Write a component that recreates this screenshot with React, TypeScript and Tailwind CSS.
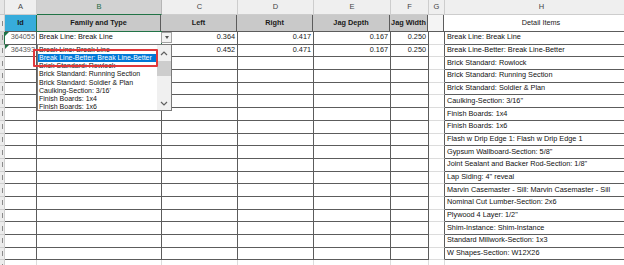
const FONT = { fontFamily: '"Liberation Sans", Arial, sans-serif' };

const columns = [
  { key: "A", w: "w-[32px]" },
  { key: "B", w: "w-[125px]" },
  { key: "C", w: "w-[76px]" },
  { key: "D", w: "w-[76px]" },
  { key: "E", w: "w-[77px]" },
  { key: "F", w: "w-[38px]" },
  { key: "G", w: "w-[16px]" },
  { key: "H", w: "w-[194px]" },
];

const details = [
  "Break Line: Break Line",
  "Break Line-Better: Break Line-Better",
  "Brick Standard: Rowlock",
  "Brick Standard: Running Section",
  "Brick Standard: Soldier & Plan",
  "Caulking-Section: 3/16\"",
  "Finish Boards: 1x4",
  "Finish Boards: 1x6",
  "Flash w Drip Edge 1: Flash w Drip Edge 1",
  "Gypsum Wallboard-Section: 5/8\"",
  "Joint Sealant and Backer Rod-Section: 1/8\"",
  "Lap Siding: 4\" reveal",
  "Marvin Casemaster - Sill: Marvin Casemaster - Sill",
  "Nominal Cut Lumber-Section: 2x6",
  "Plywood 4 Layer: 1/2\"",
  "Shim-Instance: Shim-Instance",
  "Standard Millwork-Section: 1x3",
  "W Shapes-Section: W12X26",
];

const values: Record<number, string[]> = {
  0: ["364055", "Break Line: Break Line", "0.364", "0.417", "0.167", "0.250"],
  1: ["364393", "", "0.452", "0.471", "0.167", "0.250"],
};

const listItems = [
  "Break Line: Break Line",
  "Break Line-Better: Break Line-Better",
  "Brick Standard: Rowlock",
  "Brick Standard: Running Section",
  "Brick Standard: Soldier & Plan",
  "Caulking-Section: 3/16'",
  "Finish Boards: 1x4",
  "Finish Boards: 1x6",
];

// row headers are scrolled almost out of view, only a sliver shows
const RowNum = ({ active, h }: { active?: boolean; h: string }) => (
  <div
    className={`${h} w-[5px] shrink-0 flex justify-end items-center border-b border-r ${
      active ? "bg-[#d8d8d8] border-r-[#217346] border-b-[#c8c8c8]" : "bg-[#ececec] border-[#cfcfcf]"
    }`}
  >
    <span className="w-[1px] h-[5px] mr-[1px] bg-[#8a8a8a]" />
  </div>
);

export default function App() {
  return (
    <div className="relative w-[624px] h-[265px] overflow-hidden bg-white" style={FONT}>
      {/* column letters */}
      <div className="flex h-[15px]">
        <div className="w-[5px] shrink-0 bg-[#e6e6e6] border-r border-b border-[#c8c8c8]" />
        {columns.map((c) => (
          <div
            key={c.key}
            className={`${c.w} shrink-0 flex items-center justify-center text-[7.5px] border-r ${
              c.key === "B"
                ? "bg-[#d2d2d2] text-[#1e6b41] border-b border-b-[#217346] border-r-[#b5b5b5]"
                : "bg-[#efefef] text-[#444] border-b border-[#cdcdcd]"
            }`}
          >
            {c.key}
          </div>
        ))}
      </div>

      {/* header row */}
      <div className="flex h-[17px]">
        <RowNum h="h-[17px]" />
        <div className="w-[32px] shrink-0 bg-[#37acdb] border-r border-b border-[#5c5c5c] flex items-center justify-center text-[7.3px] font-bold text-[#1a1a1a]">
          Id
        </div>
        {["Family and Type", "Left", "Right", "Jag Depth", "Jag Width"].map((t, i) => (
          <div
            key={t}
            className={`${columns[i + 1].w} shrink-0 bg-[#c9c9c9] border-r border-b border-[#5c5c5c] flex items-center justify-center text-[7.3px] font-bold text-[#1a1a1a] whitespace-nowrap ${
              i === 0 ? "border-l border-l-[#217346] -ml-px" : ""
            }`}
          >
            {t}
          </div>
        ))}
        <div className="w-[16px] shrink-0 bg-[#f4f4f4] border-r border-b border-[#5c5c5c]" />
        <div className="w-[194px] shrink-0 bg-white border-b border-[#5c5c5c] flex items-center justify-center text-[7.3px] text-[#222]">
          Detail Items
        </div>
      </div>

      {/* data rows */}
      {details.map((d, i) => {
        const v = values[i] || ["", "", "", "", "", ""];
        return (
          <div key={i} className="flex h-[12.7px]">
            <RowNum active={i === 0} h="h-[12.7px]" />
            <div className="relative w-[32px] shrink-0 border-r border-b border-[#5c5c5c] flex items-center justify-end pr-[1px] text-[7.3px] text-[#5a5a5a]">
              {v[0] && (
                <span className="absolute left-0 top-0 w-0 h-0 border-t-[4px] border-r-[4px] border-t-[#1e7145] border-r-transparent" />
              )}
              {v[0]}
            </div>
            <div
              className={`w-[125px] shrink-0 flex items-center pl-[2px] text-[7.3px] text-[#111] whitespace-nowrap ${
                i === 0 ? "border border-[#217346] -ml-px -mt-px h-[13.7px] w-[126px]" : "border-r border-b border-[#5c5c5c]"
              }`}
            >
              {v[1]}
            </div>
            {[2, 3, 4, 5].map((k) => (
              <div
                key={k}
                className={`${columns[k].w} shrink-0 border-r border-b border-[#5c5c5c] flex items-center justify-end pr-[2px] text-[7.3px] text-[#222]`}
              >
                {v[k]}
              </div>
            ))}
            <div className="w-[16px] shrink-0 border-r border-r-[#5c5c5c] border-b border-b-[#dcdcdc]" />
            <div className="w-[194px] shrink-0 border-b border-[#5c5c5c] flex items-center pl-[2px] text-[7.3px] text-[#111] whitespace-nowrap">
              {d}
            </div>
          </div>
        );
      })}

      {/* trailing empty row */}
      <div className="flex h-[12.7px]">
        <RowNum h="h-[12.7px]" />
        {columns.map((c) => (
          <div key={c.key} className={`${c.w} shrink-0 border-r border-b border-[#dcdcdc]`} />
        ))}
      </div>

      {/* in-cell dropdown button */}
      <div className="absolute left-[161px] top-[32px] w-[11px] h-[11px] bg-[#f3f3f3] border border-[#a3a3a3] flex items-center justify-center">
        <span className="w-0 h-0 border-l-[2.5px] border-r-[2.5px] border-t-[3px] border-l-transparent border-r-transparent border-t-[#555]" />
      </div>

      {/* validation list */}
      <div className="absolute left-[37px] top-[44px] w-[135px] h-[67px] bg-white border border-[#7a7a7a] flex">
        <div className="flex-1 pt-[1px] overflow-hidden">
          {listItems.map((t, i) => (
            <div
              key={t}
              className={`h-[8.2px] flex items-center pl-[1px] text-[7px] whitespace-nowrap ${
                i === 1 ? "bg-[#0078d7] text-white" : "text-[#111]"
              }`}
            >
              {t}
            </div>
          ))}
        </div>
        <div className="w-[14px] bg-[#f0f0f0] flex flex-col items-center">
          <svg width="8" height="6" viewBox="0 0 8 6" className="mt-[5px]">
            <polyline points="1,5 4,2 7,5" fill="none" stroke="#606060" strokeWidth="1.2" />
          </svg>
          <div className="mt-[5px] w-full h-[15px] bg-[#cdcdcd]" />
          <div className="flex-1" />
          <svg width="8" height="6" viewBox="0 0 8 6" className="mb-[3px]">
            <polyline points="1,1 4,4 7,1" fill="none" stroke="#606060" strokeWidth="1.2" />
          </svg>
        </div>
      </div>

      {/* highlight annotation */}
      <div className="absolute left-[33px] top-[49px] w-[125px] h-[18px] border-2 border-[#e0393b] rounded-[1px]" />
    </div>
  );
}
